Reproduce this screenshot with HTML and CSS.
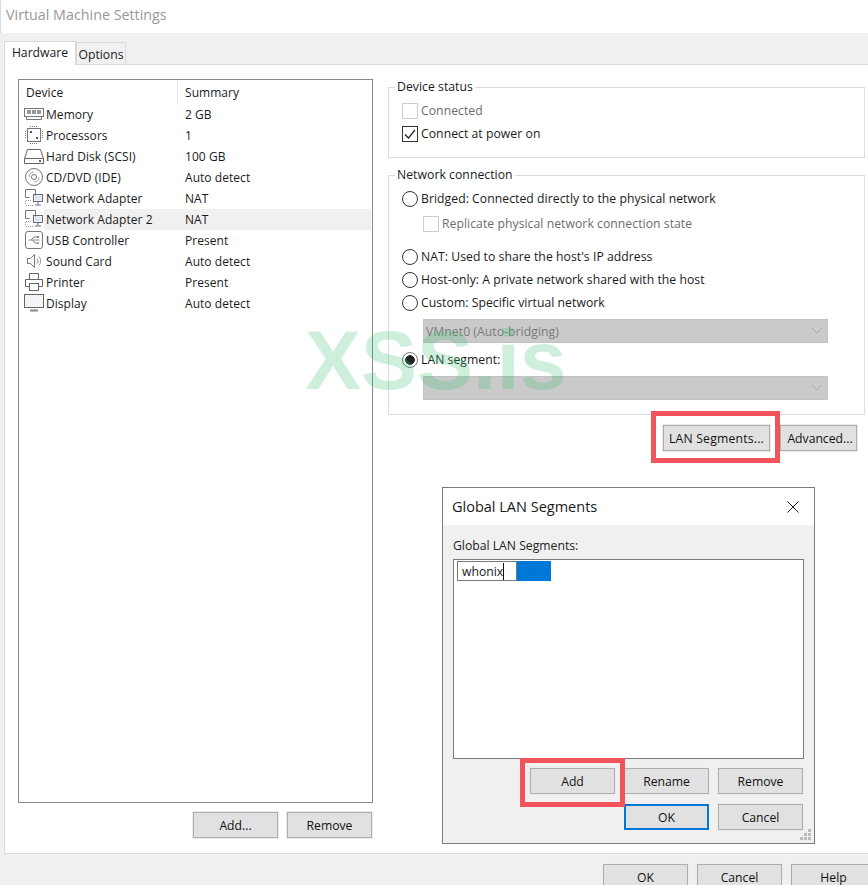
FILE: index.html
```html
<!DOCTYPE html>
<html lang="en">
<head>
<meta charset="utf-8">
<title>Virtual Machine Settings</title>
<link rel="stylesheet" href="styles.css">
</head>
<body>
<svg class="defs" width="0" height="0" aria-hidden="true">
  <symbol id="i-memory" viewBox="0 0 20 20"><g fill="none" stroke="#777"><rect x=".5" y="4.5" width="19" height="8"/><path d="M2.5 12.500v3h15v-3"/></g><g fill="#999"><rect x="3" y="6" width="4" height="4"/><rect x="8" y="6" width="4" height="4"/><rect x="13" y="6" width="4" height="4"/></g></symbol>
  <symbol id="i-cpu" viewBox="0 0 20 20"><rect x="3.500" y="3.500" width="13" height="13" fill="none" stroke="#777"/><path d="M6 1.500h8M6 18.500h8M1.500 6v8M18.500 6v8" stroke="#777" stroke-dasharray="1 1" fill="none"/><rect x="6" y="6" width="2" height="2" fill="#555"/><rect x="12" y="12" width="2" height="2" fill="#555"/></symbol>
  <symbol id="i-disk" viewBox="0 0 20 20"><path d="M.5 12.500 3.500 3.500h13l3 9v5H.5zM.5 12.500h19" fill="none" stroke="#666"/><rect x="15" y="14" width="2" height="2" fill="#666"/></symbol>
  <symbol id="i-cd" viewBox="0 0 20 20"><g fill="none" stroke="#777"><circle cx="10" cy="10" r="8.500"/><circle cx="10" cy="10" r="2.500"/><path d="M5 10a5 5 0 0 1 5-5" stroke="#aaa"/><path d="M15 10a5 5 0 0 1-5 5" stroke="#aaa"/></g></symbol>
  <symbol id="i-net" viewBox="0 0 20 20"><g fill="none" stroke="#777"><path d="M1.500 1.500h10v7"/><path d="M1.500 1.500v8h4"/><path d="M2 12.500h5M2 17.500h7M1.500 13v4" stroke-dasharray="1 1" stroke="#999"/><rect x="9.500" y="6.500" width="9" height="7" stroke="#668"/><path d="M14 13.500v3M11 17h6" stroke="#668"/></g><rect x="10.500" y="7.500" width="7" height="5" fill="#dde6f0"/></symbol>
  <symbol id="i-usb" viewBox="0 0 20 20"><rect x="1.500" y="1.500" width="17" height="17" rx="2.500" fill="none" stroke="#777"/><path d="M4.500 10h11M7 10l3-3h3M8.500 10l2.500 3h2" fill="none" stroke="#888"/><rect x="13" y="6" width="2" height="2" fill="#888"/><circle cx="14" cy="13" r="1" fill="#888"/></symbol>
  <symbol id="i-sound" viewBox="0 0 20 20"><path d="M3.500 7.500h3l4-4v13l-4-4h-3z" fill="none" stroke="#777"/><path d="M13 7.500a4 4 0 0 1 0 5M15 5.500a7 7 0 0 1 0 9" fill="none" stroke="#999"/></symbol>
  <symbol id="i-printer" viewBox="0 0 20 20"><g fill="none" stroke="#666"><path d="M5.500 7.500v-6h9v6"/><path d="M5.500 14.500h-4v-7h17v7h-4"/><rect x="5.500" y="11.500" width="9" height="7"/></g></symbol>
  <symbol id="i-display" viewBox="0 0 20 20"><rect x=".5" y="1.500" width="19" height="13" fill="none" stroke="#666"/><rect x="1" y="2" width="18" height="12" fill="#f4f4f4"/><path d="M6 17.500h8" stroke="#888" stroke-width="2"/></symbol>
</svg>

<header class="titlebar">Virtual Machine Settings</header>

<nav class="tabs">
  <div class="tab tab-active">Hardware</div>
  <div class="tab">Options</div>
</nav>

<main class="panel">
  <section class="left">
    <div class="devices">
      <div class="dev-head"><span class="col-name">Device</span><span class="col-sum">Summary</span></div>
      <div class="dev-row"><svg class="dev-icon"><use href="#i-memory"/></svg><div class="dev-body"><span class="dev-name">Memory</span><span>2 GB</span></div></div>
      <div class="dev-row"><svg class="dev-icon"><use href="#i-cpu"/></svg><div class="dev-body"><span class="dev-name">Processors</span><span>1</span></div></div>
      <div class="dev-row"><svg class="dev-icon"><use href="#i-disk"/></svg><div class="dev-body"><span class="dev-name">Hard Disk (SCSI)</span><span>100 GB</span></div></div>
      <div class="dev-row"><svg class="dev-icon"><use href="#i-cd"/></svg><div class="dev-body"><span class="dev-name">CD/DVD (IDE)</span><span>Auto detect</span></div></div>
      <div class="dev-row"><svg class="dev-icon"><use href="#i-net"/></svg><div class="dev-body"><span class="dev-name">Network Adapter</span><span>NAT</span></div></div>
      <div class="dev-row dev-selected"><svg class="dev-icon"><use href="#i-net"/></svg><div class="dev-body"><span class="dev-name">Network Adapter 2</span><span>NAT</span></div></div>
      <div class="dev-row"><svg class="dev-icon"><use href="#i-usb"/></svg><div class="dev-body"><span class="dev-name">USB Controller</span><span>Present</span></div></div>
      <div class="dev-row"><svg class="dev-icon"><use href="#i-sound"/></svg><div class="dev-body"><span class="dev-name">Sound Card</span><span>Auto detect</span></div></div>
      <div class="dev-row"><svg class="dev-icon"><use href="#i-printer"/></svg><div class="dev-body"><span class="dev-name">Printer</span><span>Present</span></div></div>
      <div class="dev-row"><svg class="dev-icon"><use href="#i-display"/></svg><div class="dev-body"><span class="dev-name">Display</span><span>Auto detect</span></div></div>
    </div>
    <div class="left-actions">
      <button class="btn">Add...</button>
      <button class="btn">Remove</button>
    </div>
  </section>

  <section class="right">
    <fieldset class="group group-status">
      <legend>Device status</legend>
      <div class="opt opt-disabled"><span class="check check-disabled"></span>Connected</div>
      <div class="opt"><span class="check"><svg width="14" height="14" viewBox="0 0 14 14"><path d="M2 7.500 5.500 11 12 3" fill="none" stroke="#222" stroke-width="1.200"/></svg></span>Connect at power on</div>
    </fieldset>
    <fieldset class="group group-net">
      <legend>Network connection</legend>
      <div class="opt"><span class="radio"></span>Bridged: Connected directly to the physical network</div>
      <div class="opt opt-sub opt-disabled"><span class="check check-disabled"></span>Replicate physical network connection state</div>
      <div class="opt opt-gap"><span class="radio"></span>NAT: Used to share the host's IP address</div>
      <div class="opt"><span class="radio"></span>Host-only: A private network shared with the host</div>
      <div class="opt"><span class="radio"></span>Custom: Specific virtual network</div>
      <div class="select select-first">VMnet0 (Auto-bridging)<svg class="chev" width="12" height="8" viewBox="0 0 12 8"><path d="M1 1l5 5 5-5" fill="none" stroke="#aaa"/></svg></div>
      <div class="opt opt-lan"><span class="radio radio-on"></span>LAN segment:</div>
      <div class="select select-second"><svg class="chev" width="12" height="8" viewBox="0 0 12 8"><path d="M1 1l5 5 5-5" fill="none" stroke="#aaa"/></svg></div>
    </fieldset>
    <div class="right-actions">
      <button class="btn btn-lan">LAN Segments...</button>
      <button class="btn btn-adv">Advanced...</button>
    </div>
  </section>
</main>

<footer class="footer">
  <button class="btn">OK</button>
  <button class="btn">Cancel</button>
  <button class="btn">Help</button>
</footer>

<div class="watermark">XSS.is</div>
<div class="mark mark-lan"></div>

<aside class="dialog">
  <div class="dlg-title"><span>Global LAN Segments</span>
    <svg width="14" height="14" viewBox="0 0 14 14"><path d="M1.500 1.500l11 11M12.500 1.500l-11 11" stroke="#222" fill="none"/></svg>
  </div>
  <div class="dlg-body">
    <div class="dlg-label">Global LAN Segments:</div>
    <div class="dlg-list">
      <div class="seg"><div class="seg-input"><span class="seg-text">whonix</span></div></div>
    </div>
    <div class="dlg-actions">
      <button class="btn">Add</button>
      <button class="btn">Rename</button>
      <button class="btn">Remove</button>
    </div>
    <div class="dlg-actions dlg-actions-2">
      <button class="btn btn-default">OK</button>
      <button class="btn">Cancel</button>
    </div>
    <svg class="grip" width="12" height="12" viewBox="0 0 12 12"><g fill="#bbb"><rect x="8" y="0" width="3" height="3"/><rect x="4" y="4" width="3" height="3"/><rect x="8" y="4" width="3" height="3"/><rect x="0" y="8" width="3" height="3"/><rect x="4" y="8" width="3" height="3"/><rect x="8" y="8" width="3" height="3"/></g></svg>
  </div>
  <div class="mark mark-add"></div>
</aside>
</body>
</html>
```
FILE: styles.css
```css
* { box-sizing: border-box; }
html, body { margin: 0; height: 885px; overflow: hidden; }
body {
  position: relative;
  background: #f0f0f0;
  font: 12.2px/16px "Open Sans", "Noto Sans", sans-serif;
  color: #1a1a1a;
  display: flex;
  flex-direction: column;
}
.defs { position: absolute; }

.titlebar {
  height: 33px;
  flex: none;
  background: #fff;
  border-left: 1px solid #cfdcec;
  padding: 6px 0 0 5px;
  font-size: 14.3px;
  line-height: 18px;
  color: #999;
}

.tabs { height: 31px; flex: none; padding-left: 4px; display: flex; align-items: flex-end; position: relative; z-index: 1; }
.tab {
  height: 22px;
  width: 50px;
  background: #f0f0f0;
  border: 1px solid #d9d9d9;
  border-bottom: 0;
  text-align: center;
  line-height: 23px;
}
.tab-active {
  height: 24px;
  width: 72px;
  margin-bottom: -1px;
  background: #fff;
  line-height: 22px;
}

.panel {
  flex: none;
  height: 790px;
  margin-left: 4px;
  background: #fff;
  border: 1px solid #dcdcdc;
  border-right: 0;
  padding: 14px 0 0 13px;
  display: flex;
}

.left { width: 355px; flex: none; }
.devices { height: 724px; border: 1px solid #828790; font-size: 12px; letter-spacing: .05px; }
.dev-head { height: 24px; display: flex; line-height: 25px; }
.col-name { width: 159px; padding-left: 7px; border-right: 1px solid #e5e5e5; }
.col-sum { padding-left: 7px; }
.dev-row { height: 21px; display: flex; padding-left: 5px; padding-right: 1px; line-height: 21px; }
.dev-icon { width: 20px; height: 20px; flex: none; }
.dev-body { flex: 1; display: flex; padding-left: 2px; }
.dev-name { width: 139px; }
.dev-selected .dev-body { background: #f0f0f0; }

.left-actions { display: flex; justify-content: flex-end; gap: 9px; padding-right: 1px; margin-top: 9px; }

.btn {
  width: 85px;
  height: 26px;
  padding: 0;
  border: 1px solid #adadad;
  background: #e1e1e1;
  box-shadow: 0 0 0 1px #ececec;
  font: inherit;
  line-height: 26px;
  color: #111;
  flex: none;
}

.right { width: 477px; margin-left: 15px; flex: none; display: flex; flex-direction: column; }
.group { margin: 0; min-width: 0; border: 1px solid #dcdcdc; padding: 0 0 0 13px; letter-spacing: .05px; }
.group legend { padding: 0 2px; margin-left: -7px; line-height: 16px; }
.group-status { height: 79px; padding-top: 4px; }
.group-net { height: 248px; margin-top: 9px; padding-top: 4px; }

.opt { height: 23px; display: flex; align-items: center; gap: 3px; line-height: 23px; }
.opt-disabled { color: #6d6d6d; }
.opt-sub { margin: 2px 0 0 21px; }
.opt-gap { margin-top: 10px; }
.opt-lan { margin-top: 5px; }

.check { width: 16px; height: 16px; flex: none; border: 1px solid #333; background: #fff; display: flex; align-items: center; justify-content: center; }
.check-disabled { border-color: #ccc; }
.radio { width: 16px; height: 16px; flex: none; border: 1px solid #333; border-radius: 50%; background: #fff; }
.radio-on { background: radial-gradient(circle, #222 0 4.5px, #fff 5px); border-color: #777; }

.select {
  width: 405px;
  height: 24px;
  margin-left: 21px;
  background: #cacaca;
  border: 1px solid #c2c2c2;
  padding-left: 2px;
  color: #7a7a7a;
  line-height: 23px;
  display: flex;
  justify-content: space-between;
  align-items: center;
}
.select-first { margin-top: 5px; }
.select-second { margin-top: 5px; justify-content: flex-end; }
.chev { margin-right: 4px; }

.right-actions { display: flex; justify-content: flex-end; gap: 10px; padding-right: 8px; margin-top: 10px; }
.btn-lan { width: 107px; letter-spacing: .2px; }
.btn-adv { width: 77px; padding-left: 3px; }

.footer { height: 31px; flex: none; display: flex; justify-content: flex-end; gap: 9px; padding-top: 10px; margin-right: -8px; }

.watermark {
  position: absolute;
  left: 305px;
  top: 312px;
  font: bold 84px/96px "Liberation Sans", sans-serif;
  color: rgba(60, 190, 110, .25);
  pointer-events: none;
}

.mark { position: absolute; border: 5px solid #f2545b; }
.mark-lan { left: 651px; top: 411px; width: 129px; height: 52px; }
.mark-add { left: 77px; top: 270px; width: 105px; height: 49px; }

.dialog {
  position: absolute;
  left: 442px;
  top: 487px;
  width: 373px;
  height: 357px;
  border: 1px solid #7a7a7a;
  background: #f0f0f0;
  display: flex;
  flex-direction: column;
}
.dlg-title {
  height: 37px;
  flex: none;
  background: #fff;
  padding: 0 14px 0 9px;
  display: flex;
  justify-content: space-between;
  align-items: center;
  font-size: 14.5px;
}
.dlg-body { position: relative; flex: 1; padding: 13px 10px 0 10px; }
.dlg-label { height: 16px; color: #222; }
.dlg-list { height: 200px; margin-top: 5px; border: 1px solid #7a7a7a; background: #fff; padding: 1px 3px; }
.seg { width: 94px; height: 20px; background: #0078d7; }
.seg-input { width: 60px; height: 20px; background: #fff; border: 1px solid #7a7a7a; padding-left: 4px; line-height: 19px; }
.seg-text { display: inline-block; height: 17px; line-height: 17px; border-right: 1px solid #111; }
.dlg-actions { display: flex; justify-content: flex-end; gap: 9px; padding-right: 1px; margin-top: 9px; }
.dlg-actions-2 { margin-top: 10px; }
.btn-default { border: 2px solid #0078d7; box-shadow: none; line-height: 24px; }
.grip { position: absolute; right: 2px; bottom: 2px; }
```
